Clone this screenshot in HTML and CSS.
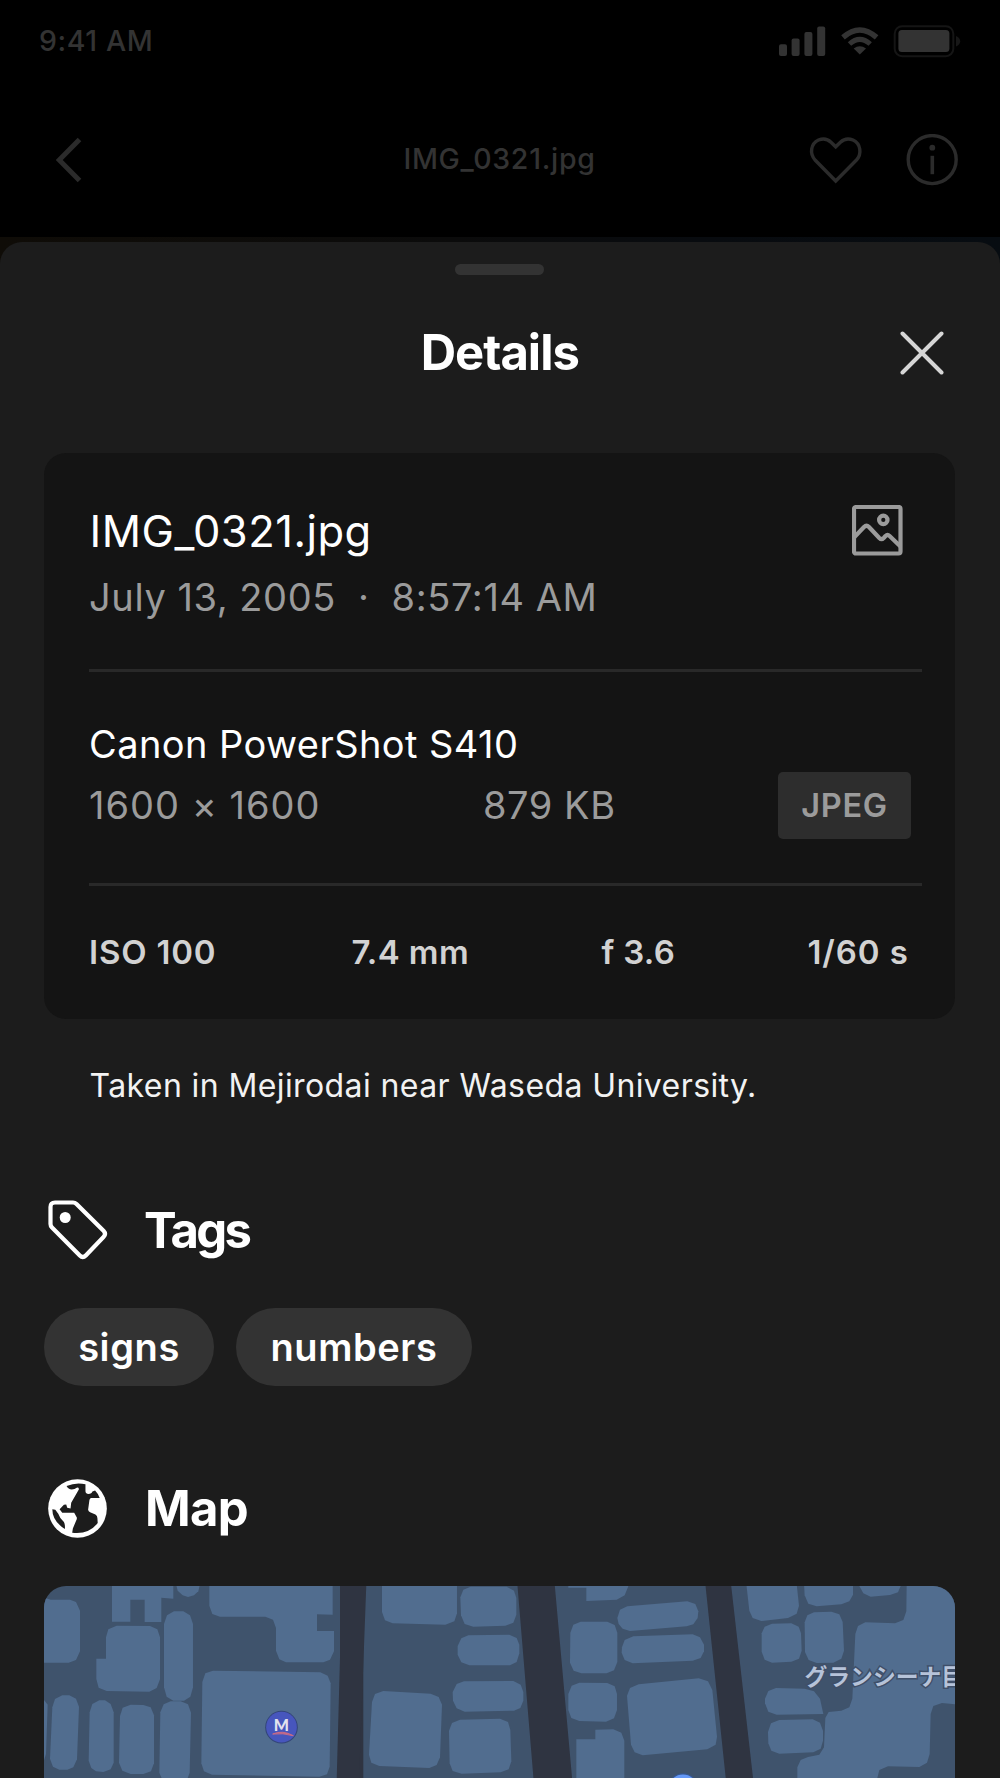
FILE: index.html
```html
<!DOCTYPE html>
<html lang="en">
<head>
<meta charset="utf-8">
<title>Photo details</title>
<link rel="stylesheet" href="styles.css">
</head>
<body>
<div class="screen">
  <div class="backdrop">
    <div class="status">
      <span class="time">9:41 AM</span>
      <svg class="status-icons" viewBox="778 24 184 34" width="184" height="34">
        <rect x="779" y="44.3" width="8" height="11.7" rx="2"/>
        <rect x="791.6" y="38.6" width="8" height="17.4" rx="2"/>
        <rect x="804.4" y="32" width="8" height="24" rx="2"/>
        <rect x="817.2" y="26.4" width="8" height="29.6" rx="2"/>
        <path d="M859.8 54.6 L853.7 48.5 Q859.8 44 866 48.5 Z"/>
        <path d="M849.5 44 Q859.8 34.6 870.2 44" fill="none" stroke="#333" stroke-width="5"/>
        <path d="M843 37.4 Q859.8 22.6 876.6 37.4" fill="none" stroke="#333" stroke-width="5.4"/>
        <rect x="894.7" y="26.2" width="58.6" height="30" rx="7.5" fill="none" stroke="#151515" stroke-width="2"/>
        <rect x="898.4" y="30" width="51" height="22" rx="3.5"/>
        <path d="M956 36 Q960.2 38 960.2 41.3 Q960.2 44.600 956 46.600 Z" fill="#171717"/>
      </svg>
    </div>
    <div class="nav">
      <svg class="back" viewBox="0 0 26 46" width="26" height="46"><path d="M23.500 2.500 L3.200 23 L23.500 43.500"/></svg>
      <span class="nav-title">IMG_0321.jpg</span>
      <div class="nav-actions">
        <svg viewBox="808 134 56 52" width="56" height="52"><path d="M835.7 181 L815.300 160.300 C809 153.500 811 143.500 818.500 140 C823.500 138 828 139.300 831 142.200 L835.700 146.800 L840.400 142.200 C843.500 139.300 848 138 853 140 C860.500 143.500 862.400 153.500 856.200 160.300 Z"/></svg>
        <svg viewBox="906 134 52 52" width="52" height="52"><circle cx="932.2" cy="159.600" r="24"/><path d="M932.300 155.800 V174.200" stroke-width="3.600"/><circle cx="932.300" cy="147.700" r="2.900" class="dot"/></svg>
      </div>
    </div>
    <div class="photo"></div>
  </div>

  <div class="sheet">
    <div class="handle"></div>
    <header class="sheet-head">
      <h1>Details</h1>
      <svg class="close" viewBox="0 0 44 44" width="44" height="44"><path d="M2.500 2.500 L41.500 41.500 M41.500 2.500 L2.500 41.500"/></svg>
    </header>

    <section class="card">
      <div class="file">
        <div class="file-text">
          <div class="name">IMG_0321.jpg</div>
          <div class="date">July 13, 2005&nbsp; · &nbsp;8:57:14 AM</div>
        </div>
        <svg class="picture" viewBox="0 0 51 51" width="51" height="51"><rect x="2" y="2" width="46.500" height="46.500" rx="2"/><circle cx="31.300" cy="14.900" r="4.200"/><path d="M2 32.500 L12 22 Q14.500 19.500 17 22 L27.300 33 Q29.500 35.200 31.700 33 L33.500 31 Q35.500 29 37.600 31 L48.500 41.500"/></svg>
      </div>
      <div class="camera">
        <div class="model">Canon PowerShot S410</div>
        <div class="specs">
          <span class="dims">1600 × 1600</span>
          <span class="size">879 KB</span>
          <span class="badge">JPEG</span>
        </div>
      </div>
      <div class="exif">
        <span class="iso">ISO 100</span><span class="focal">7.4 mm</span><span class="aperture">f 3.6</span><span class="shutter">1/60 s</span>
      </div>
    </section>

    <p class="caption">Taken in Mejirodai near Waseda University.</p>

    <div class="section-head tags-head">
      <svg viewBox="0 0 60 60" width="60" height="60" fill="none" stroke="#fff" stroke-width="4.200" stroke-linejoin="round"><path d="M2.500 7 Q2.500 2.500 7 2.500 H25 Q27 2.500 28.500 4 L55.500 30.800 Q58.500 34 55.500 37 L37.800 55.500 Q34.800 58.500 31.800 55.500 L4 27.500 Q2.500 26 2.500 24 Z"/><circle cx="17.200" cy="17.500" r="5.500" fill="#fff" stroke="none"/></svg>
      <h2 class="tags-title">Tags</h2>
    </div>
    <div class="chips"><span class="chip signs">signs</span><span class="chip numbers">numbers</span></div>

    <div class="section-head map-head">
      <svg viewBox="55 595 178 178" width="59" height="59"><circle cx="144" cy="684" r="88.500" fill="#fff"/><g fill="#1c1c1c"><path d="M111 616 Q140 604 168 611 V632 Q169 640 177 640 Q187 640 189 633 L197 630 Q206 639 211 652 H186 Q181 652 180 658 L176 688 Q177 694 182 695 L198 702 Q204 706 204 713 L205 728 Q178 763 128 757 L130 744 L142 716 V711 L134 697 H98 L90 686 L103 673 L110 672 L113 682 L123 684 L125 667 L148 627 Q149 621 143 621 L135 625 Q118 630 111 616 Z"/><path d="M68 686 L77 688 L86 700 Q90 713 103 725 Q107 732 106 746 Q68 722 68 686 Z"/></g></svg>
      <h2 class="map-title">Map</h2>
    </div>
    <svg class="map" viewBox="44 1585.300 911 193" width="911" height="193">
      <rect x="44" y="1585" width="912" height="194" fill="#3f536c"/>
      <g transform="translate(30 1570) scale(.33333)" fill="#516d8f">
        <path d="M40 80 L62 87 H120 L138 94 L150 120 V242 L138 268 L116 276 H40 Z"/>
        <path d="M246 40 H430 V84 L394 81 V154 H344 V87 H301 V153 H246 Z"/>
        <path d="M438 40 L443 60 L458 74 L474 79 L492 74 L505 62 L510 40 Z"/>
        <path d="M538 40 H908 V132 L861 131 V181 H912 V242 L900 267 L880 275 H768 L748 266 L738 240 V172 L729 147 L706 138 H570 L547 130 L538 105 Z"/>
        <path d="M228 200 L235 176 L260 165 L360 166 L382 176 L390 200 V326 L380 352 L358 363 L230 361 L206 351 L199 325 V264 H228 Z"/>
        <path d="M402 160 L411 134 L432 122 H460 L480 134 L489 160 V350 L481 378 L462 390 H430 L410 378 L402 350 Z"/>
        <path d="M40 385 L53 402 L48 550 L40 575 Z"/>
        <path d="M67 410 L75 385 L97 374 H118 L138 384 L147 408 L141 566 L130 590 L112 597 H88 L69 588 L60 564 Z"/>
        <path d="M179 425 L187 400 L208 389 H225 L242 400 L251 425 V576 L242 596 L220 604 L198 602 L184 592 L176 570 Z"/>
        <path d="M270 436 L278 411 L302 402 L340 403 L362 410 L372 434 V578 L363 602 L340 610 H302 L277 600 L267 576 Z"/>
        <path d="M391 425 L401 401 L422 392 H452 L474 401 L483 426 L479 606 L470 630 H398 L388 606 Z"/>
        <path d="M517 334 L526 308 L549 300 L871 305 L893 315 L902 338 L899 588 L891 611 L868 618 L546 612 L522 602 L514 578 Z"/>
        <path d="M936 40 L920 630 H1000 V40 Z" fill="#2f3441"/>
        <circle cx="754.500" cy="469.500" r="49" fill="#334579"/>
        <circle cx="754.500" cy="469.500" r="46" fill="#4756bd"/>
        <text x="754" y="480" class="mark">M</text>
        <path d="M728 490 Q758 477 790 495 Q758 486 728 490 Z" fill="#c86a87" stroke="#c86a87" stroke-width="3"/>
      </g>
      <g transform="translate(350 1570) scale(.33333)" fill="#516d8f">
        <path d="M-30 40 H49 L27 630 H-30 Z M502 40 H614 L667 630 H551 Z" fill="#2f3441"/>
        <path d="M96 40 H321 V128 L313 152 L286 162 L128 158 L105 149 L96 124 Z"/>
        <path d="M331 80 L340 57 L362 48 H470 L492 60 L499 82 V132 L490 156 L466 165 L370 168 L344 160 L333 134 Z"/>
        <path d="M323 226 L334 203 L355 194 L478 192 L500 202 L508 222 V248 L500 274 L480 284 H358 L334 275 L323 252 Z"/>
        <path d="M308 364 L320 340 L342 332 L490 331 L512 342 L520 364 V390 L511 412 L492 420 L344 423 L320 413 L309 390 Z"/>
        <path d="M66 394 L75 370 L100 361 L242 369 L266 379 L276 402 L270 560 L260 583 L238 592 L88 586 L64 576 L57 552 Z"/>
        <path d="M297 480 L306 457 L330 447 L450 444 L474 454 L481 478 L484 572 L476 596 L452 605 L335 609 L308 601 L299 578 Z"/>
        <path d="M655 40 V51 H709 V91 L800 87 L824 74 L835 47 V40 Z"/>
        <path d="M661 186 L670 162 L692 153 H772 L794 163 L802 186 V274 L792 299 L770 308 H694 L671 300 L660 276 Z"/>
        <path d="M655 370 L665 345 L688 336 L772 337 L794 347 L801 370 V418 L792 443 L768 453 L688 451 L664 442 L655 418 Z"/>
        <path d="M679 506 H736 V477 L790 476 L814 486 L823 510 V630 H679 Z"/>
        <path d="M802 142 L810 117 L832 107 L1012 92 L1036 100 L1045 122 L1043 142 L1030 161 L1010 167 L840 181 L818 174 L806 160 Z"/>
        <path d="M816 230 L824 208 L850 197 L1028 191 L1050 200 L1062 222 V242 L1052 262 L1028 270 L848 278 L824 268 L815 246 Z"/>
        <path d="M831 375 L840 352 L866 341 L1046 323 L1074 332 L1087 358 L1101 498 L1097 522 L1072 536 L878 554 L854 545 L843 522 Z"/>
        <circle cx="999" cy="655" r="47" fill="#36578f"/>
        <circle cx="999" cy="655" r="43.500" fill="#6498f6"/>
      </g>
      <g transform="translate(670 1570) scale(.33333)" fill="#516d8f">
        <path d="M106 40 H183 L250 630 H168 Z" fill="#2f3441"/>
        <path d="M229 40 H380 L387 105 L380 129 L354 142 L274 151 L248 142 L238 120 Z"/>
        <path d="M402 40 H549 V72 L538 92 L514 101 L440 107 L415 99 L404 74 Z"/>
        <path d="M568 46 L580 68 L602 78 L660 73 L684 65 L692 46 Z"/>
        <path d="M275 188 L284 168 L306 159 L364 158 L386 168 L393 188 L395 240 L387 264 L364 273 L306 276 L284 267 L275 243 Z"/>
        <path d="M404 155 L412 134 L432 125 L484 123 L508 131 L518 154 L522 240 L514 264 L490 276 L440 277 L416 268 L405 244 Z"/>
        <path d="M285 384 L295 361 L318 352 L404 354 L432 362 L450 384 L460 430 L320 432 L295 423 L285 398 Z"/>
        <path d="M294 484 L303 458 L328 448 L428 446 L450 456 L459 480 V510 L452 534 L430 545 L328 549 L304 540 L295 518 Z"/>
        <path d="M710 40 H870 V402 L816 397 L790 406 L782 430 L779 550 L771 576 L748 589 L654 587 L628 598 L620 630 H382 V590 L392 568 L414 559 L448 552 L462 530 L466 442 L476 424 L514 420 L538 410 L547 384 L556 190 L564 166 L586 155 L675 158 L700 148 L709 122 Z"/>
      </g>
      <text x="804.500" y="1684" class="place">グランシーナ目</text>
    </svg>
  </div>
</div>
</body>
</html>
```
FILE: styles.css
```css
* { box-sizing: border-box; margin: 0; padding: 0; }
body { background: #000; }
.screen {
  width: 1000px;
  height: 1778px;
  overflow: hidden;
  background: #000;
  color: #fff;
  font-family: Inter, "Liberation Sans", sans-serif;
  font-weight: 400;
  white-space: nowrap;
}
svg { display: block; flex: none; }

.backdrop { height: 277px; margin-bottom: -35px; color: #333; }
.status { height: 82px; padding: 0 38px 0 39px; display: flex; align-items: center; justify-content: space-between; }
.time { font-size: 28.500px; font-weight: 500; letter-spacing: .6px; margin-top: -2px; }
.status-icons { fill: #333; }
.nav {
  height: 155px;
  padding: 0 42px 0 56px;
  display: grid;
  grid-template-columns: 133px 1fr 148px;
  align-items: center;
}
.nav svg { fill: none; stroke: #2b2b2b; stroke-width: 3.400; }
.nav .back { stroke-width: 5; }
.nav .dot { fill: #2b2b2b; stroke: none; }
.nav-title { font-size: 28.500px; font-weight: 500; letter-spacing: .7px; text-align: center; margin-top: -2px; }
.nav-actions { display: flex; justify-content: space-between; margin-left: -2px; }
.photo { height: 40px; background: linear-gradient(90deg, #0f0c07, #0b0b0b 45%, #080b0f 70%, #070c11); }

.sheet {
  position: relative;
  height: 1536px;
  padding: 21.500px 45px 0 44px;
  background: #1c1c1c;
  border-radius: 22px 22px 0 0;
}
.handle { width: 89px; height: 11.500px; margin: 0 auto; border-radius: 6px; background: #333; }
.sheet-head {
  height: 155px;
  margin-bottom: 22.500px;
  padding-right: 11px;
  display: grid;
  grid-template-columns: 55.500px 1fr 44px;
  align-items: center;
}
.sheet-head h1 { grid-column: 2; text-align: center; }
h1, h2 { font-size: 49px; line-height: 60px; font-weight: 700; letter-spacing: -1px; }
.close { stroke: #d6d6d6; stroke-width: 4; stroke-linecap: round; }

.card { height: 566px; padding: 0 33px 0 45px; border-radius: 22px; background: #141414; display: flex; flex-direction: column; }
.file { height: 219.500px; padding: 52.500px 19px 0 0; display: flex; justify-content: space-between; border-bottom: 3px solid #292929; }
.name { font-size: 43.500px; line-height: 52px; letter-spacing: .5px; padding-left: .6px; }
.date { font-size: 38px; line-height: 50px; margin-top: 15px; letter-spacing: .62px; word-spacing: -.3px; color: #9b9b9b; }
.picture { fill: none; stroke: #9b9b9b; stroke-width: 4.200; stroke-linejoin: round; }
.camera { height: 214px; padding-top: 47px; border-bottom: 3px solid #292929; }
.model { font-size: 38px; line-height: 50px; letter-spacing: .42px; }
.specs { display: grid; grid-template-columns: 394px 295px auto; align-items: center; justify-content: start; height: 67px; margin-top: 2.500px; color: #9b9b9b; font-size: 38px; }
.dims { letter-spacing: 1px; }
.size { letter-spacing: .55px; }
.badge { width: 133px; height: 67px; border-radius: 5px; background: #2d2d2d; font-size: 32.500px; line-height: 67px; font-weight: 600; letter-spacing: .7px; text-align: center; }
.exif { height: 132px; display: grid; grid-template-columns: 262.500px 250px 206px auto; align-items: center; justify-content: start; color: #d2d2d2; font-size: 33px; font-weight: 600; }
.iso { letter-spacing: .8px; }
.focal { letter-spacing: .4px; }
.aperture { letter-spacing: .3px; }
.shutter { letter-spacing: .9px; }

.caption { padding-left: 45.500px; margin-top: 47px; font-size: 32px; line-height: 40px; letter-spacing: .4px; color: #f2f2f2; }
.section-head { display: flex; align-items: center; height: 60px; padding-left: 4px; gap: 38px; }
.tags-head { margin-top: 94.500px; }
.tags-title { letter-spacing: -2.700px; margin: 1px 0 0 -2px; }
.chips { display: flex; gap: 22px; margin-top: 48px; }
.chip { height: 78px; border-radius: 39px; background: #333; font-size: 38px; line-height: 78px; font-weight: 600; letter-spacing: .6px; text-align: center; }
.signs { width: 170px; }
.numbers { width: 236px; }
.map-head { margin-top: 92px; }
.map-title { margin-top: 1px; letter-spacing: -.7px; }
.map { margin-top: 47.500px; border-radius: 22px 22px 0 0; }
.mark { font: 900 48px Lato, sans-serif; fill: #e2e2ee; text-anchor: middle; }
.place { font: 700 22.800px "Noto Sans CJK JP", sans-serif; fill: #b6c3d9; stroke: #3f4f69; stroke-width: 3px; paint-order: stroke; }
```
